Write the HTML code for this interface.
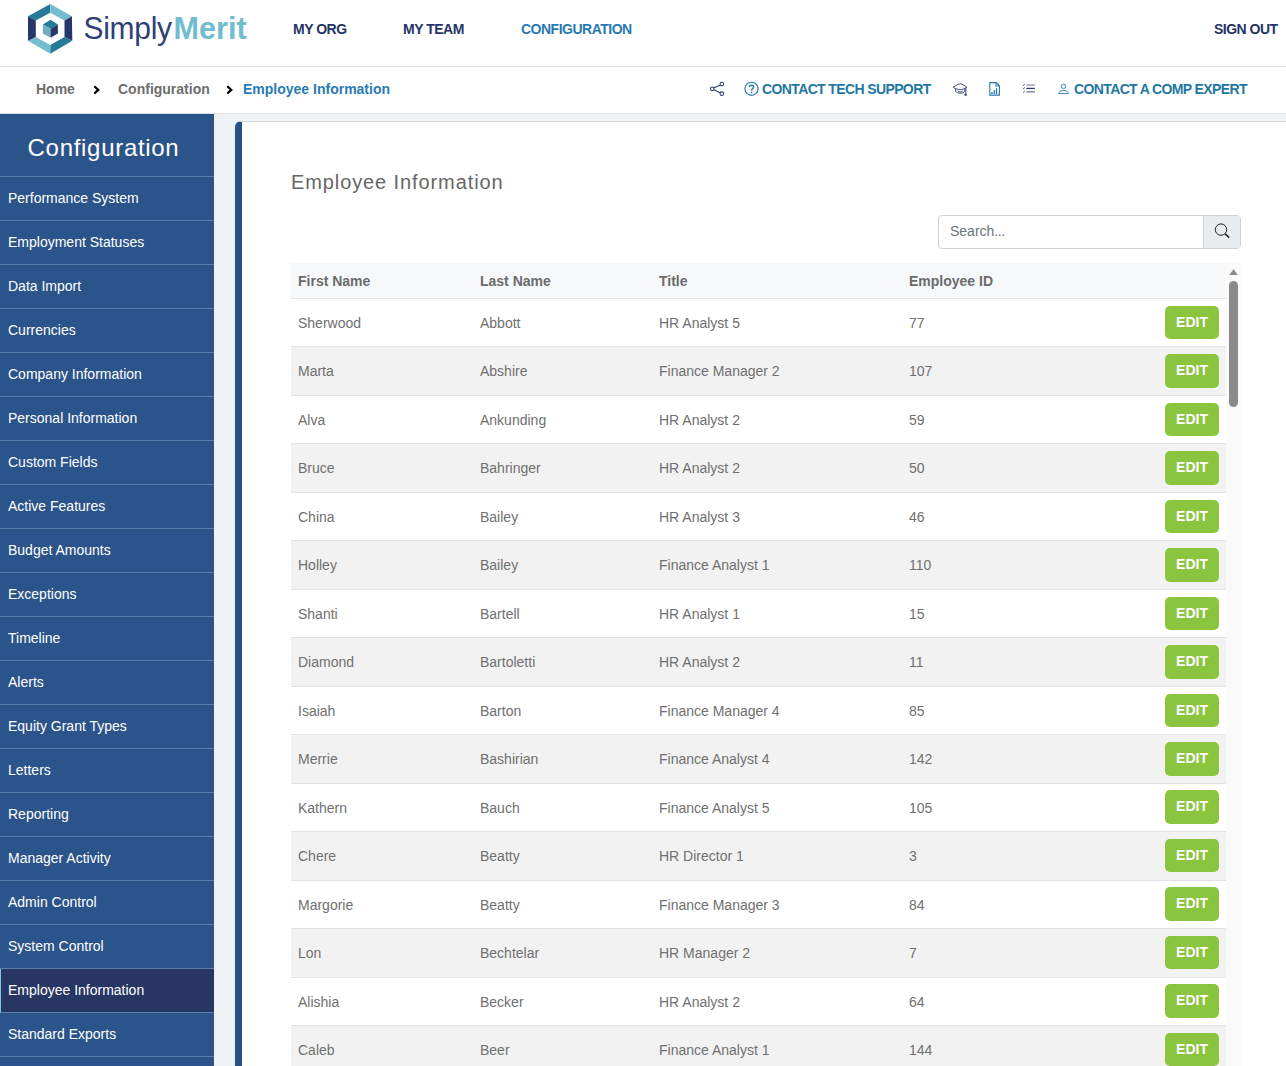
<!DOCTYPE html>
<html><head><meta charset="utf-8">
<style>
*{box-sizing:border-box;margin:0;padding:0}
html,body{width:1286px;height:1066px;overflow:hidden;background:#eff3f6;font-family:"Liberation Sans",sans-serif}
#hdr{position:absolute;left:0;top:0;width:1286px;height:67px;background:#fff;border-bottom:1px solid #dee2e6}
#logo{position:absolute;left:27px;top:3px}
.brand{position:absolute;top:10px;font-size:30px;white-space:nowrap;line-height:36px}
.nav{position:absolute;top:21px;font-size:14px;letter-spacing:-0.5px;font-weight:700;color:#263466;white-space:nowrap;line-height:16px}
#bc{position:absolute;left:0;top:67px;width:1286px;height:47px;background:#fff;border-bottom:1px solid #dde1e6}
.crumb{position:absolute;top:14px;font-size:14px;font-weight:700;color:#6e6e6e;white-space:nowrap;line-height:16px}
.util{position:absolute;top:14px;font-size:14px;letter-spacing:-0.62px;font-weight:700;color:#1f77a3;white-space:nowrap;line-height:16px}
#side{position:absolute;left:0;top:114px;width:214px;height:952px;background:#2b548a}
#side .ttl{height:63px;border-bottom:1px solid #5a7dac;color:#fff;font-size:24px;letter-spacing:0.7px;text-align:center;line-height:34px;padding-top:17px;padding-right:7px}
#side .it{height:44px;border-bottom:1px solid #5a7dac;color:#fff;font-size:14px;line-height:16px;padding:13px 0 0 8px;white-space:nowrap}
#side .it.act{background:#283663;border-left:1px solid #7ac8d8;padding-left:7px}
#card{position:absolute;left:235px;top:121px;width:1051px;height:945px;background:#fff;border-top:1px solid #d6d6d6;border-left:7px solid #25528b;border-top-left-radius:6px}
#title{position:absolute;left:291px;top:170px;font-size:20px;letter-spacing:0.9px;color:#666;line-height:24px;white-space:nowrap}
#search{position:absolute;left:938px;top:215px;width:303px;height:34px;border:1px solid #ced4da;border-radius:4px;background:#fff;overflow:hidden}
#search .ph{position:absolute;left:11px;top:7px;font-size:14px;color:#6c757d;line-height:16px}
#search .btn{position:absolute;right:0;top:0;width:37px;height:32px;background:#e9ecef;border-left:1px solid #ced4da}
#tbl{position:absolute;left:291px;top:263px;width:935px}
.th{height:36px;background:#f7f8fa;border-bottom:1px solid #e4e5e7;position:relative}
.row{height:48.47px;position:relative;border-bottom:1px solid #dfe4ea}
.row.odd{background:#fff}.row.even{background:#f2f2f2}
.c{position:absolute;font-size:14px;line-height:16px;white-space:nowrap;color:#707070}
.th .c{top:10px;font-weight:700;color:#6b6b6b}
.row .c{top:16px}
.c1{left:7px}.c2{left:189px}.c3{left:368px}.c4{left:618px}
.edit{position:absolute;left:874px;top:6.8px;width:54px;height:33.5px;border-radius:5px;background:#8bc43f;color:#fff;font-weight:700;font-size:14px;line-height:16px;text-align:center;padding-top:8px}
#sb{position:absolute;left:1226px;top:263px;width:15px;height:803px;background:#fafafa}
#thumb{position:absolute;left:1229px;top:281px;width:9px;height:126px;border-radius:5px;background:#8a8a8a}
</style></head><body>
<div id="hdr">
  <svg id="logo" width="80" height="60" viewBox="0 0 80 60" style="position:absolute;left:0;top:0">
  <path d="M50.3 3.9 L50.2 12.8 L35.8 20.6 L28 16.3 Z" fill="#267b99"/>
  <path d="M50.3 3.9 L71.9 16.3 L64.5 20.6 L50.2 12.8 Z" fill="#74bdce"/>
  <path d="M71.9 16.3 L72.3 40.8 L64.5 36.9 L64.5 20.6 Z" fill="#283769"/>
  <path d="M72.3 40.8 L50.3 53.7 L50.2 45.1 L64.5 36.9 Z" fill="#267b99"/>
  <path d="M50.3 53.7 L28 40.8 L35.8 36.9 L50.2 45.1 Z" fill="#74bdce"/>
  <path d="M28 40.8 L28 16.3 L35.8 20.6 L35.8 36.9 Z" fill="#283769"/>
  <path d="M50.5 19.8 L57.9 24.5 L50.5 28.7 L42.8 24.5 Z" fill="#267b99"/>
  <path d="M42.8 24.5 L50.5 28.7 L50.5 37.7 L42.8 33.4 Z" fill="#70b1c1"/>
  <path d="M50.5 28.7 L57.9 24.5 L57.9 33.4 L50.5 37.7 Z" fill="#283769"/>
</svg>
  <div class="brand" style="left:83.5px;top:11px;color:#2f3f76;font-size:30px;letter-spacing:-0.3px;transform:scaleY(1.07);transform-origin:0 28px">Simply</div>
  <div class="brand" style="left:173.5px;color:#72bccf;font-weight:700;font-size:30.6px">Merit</div>
  <div class="nav" style="left:293px">MY ORG</div>
  <div class="nav" style="left:403px">MY TEAM</div>
  <div class="nav" style="left:521px;color:#2979b2">CONFIGURATION</div>
  <div class="nav" style="left:1214px">SIGN OUT</div>
</div>
<div id="bc">
<svg width="1286" height="47" style="position:absolute;left:0;top:0" viewBox="0 67 1286 47">
  <path d="M94.3 86.3 L98.3 89.9 L94.3 93.5" fill="none" stroke="#000" stroke-width="2.2"/>
  <path d="M227.3 86.3 L231.3 89.9 L227.3 93.5" fill="none" stroke="#000" stroke-width="2.2"/>
  <g fill="none" stroke="#2c3a6c" stroke-width="1.05">
    <circle cx="712.2" cy="88.8" r="1.8"/><circle cx="721.8" cy="84.1" r="1.8"/><circle cx="721.8" cy="93.7" r="1.8"/>
    <path d="M714 87.8 L720 85.2 M714 89.8 L720 92.8"/>
  </g>
  <g fill="none" stroke="#2a7aa2">
    <circle cx="751.5" cy="88.8" r="6.6" stroke-width="1.15"/>
    <path d="M749.4 86.9 C749.4 84.6 753.6 84.6 753.6 86.9 C753.6 88.5 751.6 88.6 751.6 90.5" stroke-width="1.45"/>
  </g>
  <circle cx="751.6" cy="92.4" r="0.85" fill="#2a7aa2"/>
  <g fill="none" stroke="#2c3a6c" stroke-width="0.9">
    <path d="M953 87.4 C956 85.4 958 84 960.2 83.9 C962.4 84 964.4 85.4 967 87.4 C964.4 89 962.4 89.6 960.2 89.6 C958 89.6 956 89 953 87.4 Z"/>
    <path d="M955.6 89 L955.6 91.3 C957 93.8 963.4 93.8 964.8 91.3 L964.8 89"/>
    <path d="M957.6 91 C959.2 92.2 961.2 92.2 962.8 91"/>
    <path d="M965.8 87.6 L965.8 94.6"/>
  </g>
  <rect x="964.6" y="93.8" width="2" height="2" fill="#2c3a6c"/>
  <g fill="none" stroke="#2379a3" stroke-width="1.1">
    <path d="M989.8 82.6 L996.3 82.6 L999.4 85.8 L999.4 95.1 L989.8 95.1 Z"/>
    <path d="M996.1 82.8 L996.1 86 L999.2 86"/>
  </g>
  <g fill="#2379a3"><rect x="991.3" y="92" width="1.3" height="2"/><rect x="993.6" y="90.2" width="1.3" height="3.8"/><rect x="995.9" y="88.2" width="1.3" height="5.8"/></g>
  <g stroke-width="1.2" fill="none">
    <path d="M1026.3 85 L1034.9 85 M1026.3 91.9 L1034.9 91.9" stroke="#6a7690"/>
    <path d="M1026.3 88.4 L1034.9 88.4" stroke="#2c3c70"/>
    <path d="M1023 85.8 L1024.8 84.2 M1023 89.2 L1024.8 87.6 M1023 92.6 L1024.8 91" stroke="#3a3f78" stroke-width="0.9"/>
  </g>
  <g fill="none" stroke="#2a7ba6" stroke-width="0.9">
    <circle cx="1063.6" cy="86.4" r="2.2"/>
    <path d="M1058.6 93.6 C1059.2 91.6 1060.6 90.7 1062 90.7 L1065.2 90.7 C1066.6 90.7 1068 91.6 1068.6 93.6 Z"/>
  </g>
</svg>
  <div class="crumb" style="left:36px">Home</div>
  <div class="crumb" style="left:118px">Configuration</div>
  <div class="crumb" style="left:243px;color:#2a7ab4">Employee Information</div>
  <div class="util" style="left:762px">CONTACT TECH SUPPORT</div>
  <div class="util" style="left:1074px">CONTACT A COMP EXPERT</div>
</div>
<div id="side">
  <div class="ttl">Configuration</div>
  <div class="it">Performance System</div>
  <div class="it">Employment Statuses</div>
  <div class="it">Data Import</div>
  <div class="it">Currencies</div>
  <div class="it">Company Information</div>
  <div class="it">Personal Information</div>
  <div class="it">Custom Fields</div>
  <div class="it">Active Features</div>
  <div class="it">Budget Amounts</div>
  <div class="it">Exceptions</div>
  <div class="it">Timeline</div>
  <div class="it">Alerts</div>
  <div class="it">Equity Grant Types</div>
  <div class="it">Letters</div>
  <div class="it">Reporting</div>
  <div class="it">Manager Activity</div>
  <div class="it">Admin Control</div>
  <div class="it">System Control</div>
  <div class="it act">Employee Information</div>
  <div class="it">Standard Exports</div>
  <div class="it">Data Exports</div>
</div>
<div id="card"></div>
<div id="title">Employee Information</div>
<div id="search"><div class="ph">Search<span style="letter-spacing:-0.4px">...</span></div><div class="btn"></div><svg width="303" height="34" viewBox="938 215 303 34" style="position:absolute;left:-1px;top:-1px"><circle cx="1221" cy="229.6" r="5.7" fill="none" stroke="#212529" stroke-width="1"/><path d="M1225.2 233.8 L1229.2 237.6" stroke="#212529" stroke-width="1.6"/></svg></div>
<div id="tbl">
  <div class="th"><div class="c c1">First Name</div><div class="c c2">Last Name</div><div class="c c3">Title</div><div class="c c4">Employee ID</div></div>
  <div class="row odd"><div class="c c1">Sherwood</div><div class="c c2">Abbott</div><div class="c c3">HR Analyst 5</div><div class="c c4">77</div><div class="edit">EDIT</div></div>
  <div class="row even"><div class="c c1">Marta</div><div class="c c2">Abshire</div><div class="c c3">Finance Manager 2</div><div class="c c4">107</div><div class="edit">EDIT</div></div>
  <div class="row odd"><div class="c c1">Alva</div><div class="c c2">Ankunding</div><div class="c c3">HR Analyst 2</div><div class="c c4">59</div><div class="edit">EDIT</div></div>
  <div class="row even"><div class="c c1">Bruce</div><div class="c c2">Bahringer</div><div class="c c3">HR Analyst 2</div><div class="c c4">50</div><div class="edit">EDIT</div></div>
  <div class="row odd"><div class="c c1">China</div><div class="c c2">Bailey</div><div class="c c3">HR Analyst 3</div><div class="c c4">46</div><div class="edit">EDIT</div></div>
  <div class="row even"><div class="c c1">Holley</div><div class="c c2">Bailey</div><div class="c c3">Finance Analyst 1</div><div class="c c4">110</div><div class="edit">EDIT</div></div>
  <div class="row odd"><div class="c c1">Shanti</div><div class="c c2">Bartell</div><div class="c c3">HR Analyst 1</div><div class="c c4">15</div><div class="edit">EDIT</div></div>
  <div class="row even"><div class="c c1">Diamond</div><div class="c c2">Bartoletti</div><div class="c c3">HR Analyst 2</div><div class="c c4">11</div><div class="edit">EDIT</div></div>
  <div class="row odd"><div class="c c1">Isaiah</div><div class="c c2">Barton</div><div class="c c3">Finance Manager 4</div><div class="c c4">85</div><div class="edit">EDIT</div></div>
  <div class="row even"><div class="c c1">Merrie</div><div class="c c2">Bashirian</div><div class="c c3">Finance Analyst 4</div><div class="c c4">142</div><div class="edit">EDIT</div></div>
  <div class="row odd"><div class="c c1">Kathern</div><div class="c c2">Bauch</div><div class="c c3">Finance Analyst 5</div><div class="c c4">105</div><div class="edit">EDIT</div></div>
  <div class="row even"><div class="c c1">Chere</div><div class="c c2">Beatty</div><div class="c c3">HR Director 1</div><div class="c c4">3</div><div class="edit">EDIT</div></div>
  <div class="row odd"><div class="c c1">Margorie</div><div class="c c2">Beatty</div><div class="c c3">Finance Manager 3</div><div class="c c4">84</div><div class="edit">EDIT</div></div>
  <div class="row even"><div class="c c1">Lon</div><div class="c c2">Bechtelar</div><div class="c c3">HR Manager 2</div><div class="c c4">7</div><div class="edit">EDIT</div></div>
  <div class="row odd"><div class="c c1">Alishia</div><div class="c c2">Becker</div><div class="c c3">HR Analyst 2</div><div class="c c4">64</div><div class="edit">EDIT</div></div>
  <div class="row even"><div class="c c1">Caleb</div><div class="c c2">Beer</div><div class="c c3">Finance Analyst 1</div><div class="c c4">144</div><div class="edit">EDIT</div></div>
</div>
<div id="sb"></div>
<div id="thumb"></div>
<svg width="12" height="8" style="position:absolute;left:1228px;top:268px"><path d="M1.3 7 L5.6 1 L9.8 7 Z" fill="#8a8a8a"/></svg>
</body></html>
